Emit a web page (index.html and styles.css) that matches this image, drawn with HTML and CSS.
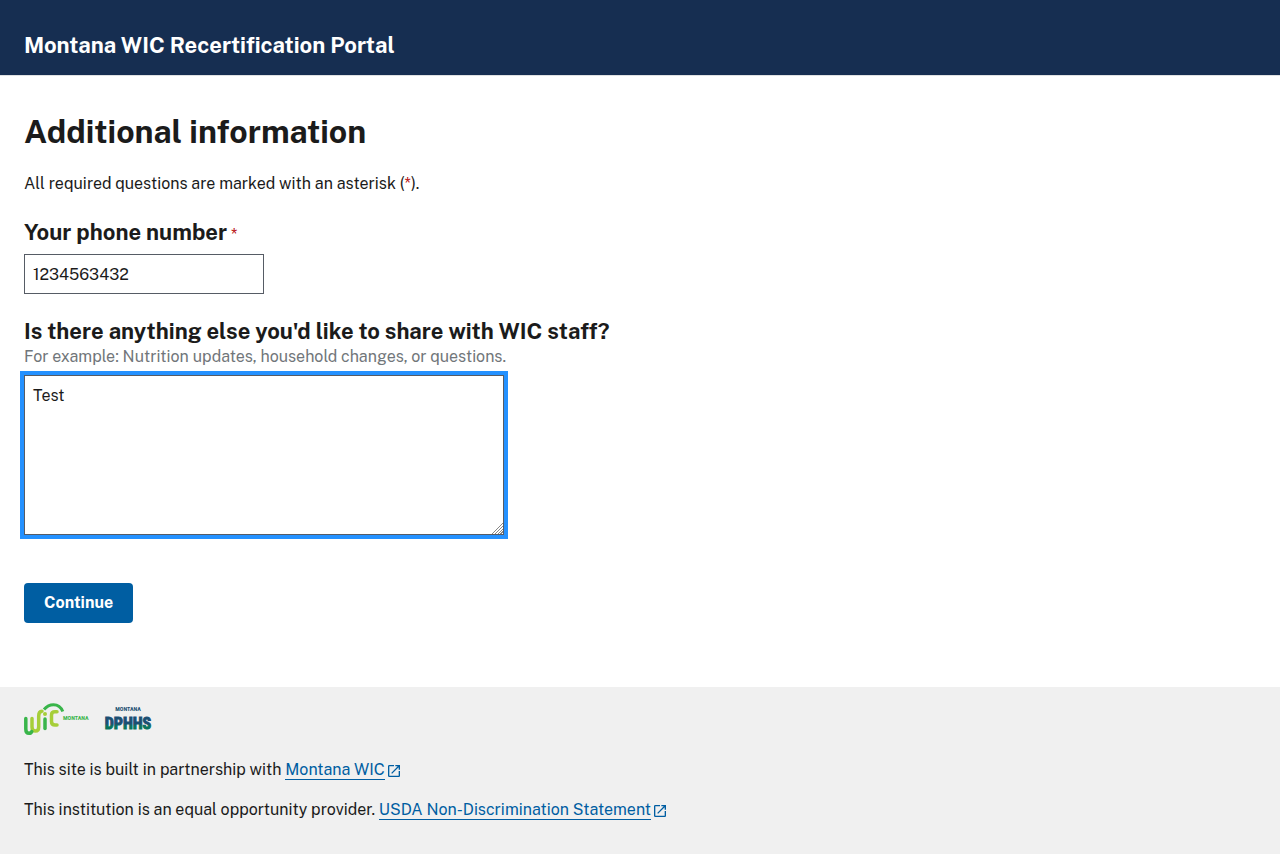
FILE: index.html
```html
<!DOCTYPE html>
<html lang="en">
<head>
<meta charset="utf-8">
<meta name="viewport" content="width=device-width, initial-scale=1">
<title>Additional information | Montana WIC Recertification Portal</title>
<link rel="stylesheet" href="styles.css">
</head>
<body>
<header class="header">
  <div class="header-title">Montana WIC Recertification Portal</div>
</header>
<main class="main">
  <h1 class="title">Additional information</h1>
  <p class="intro">All required questions are marked with an asterisk (<abbr class="required">*</abbr>).</p>
  <form class="form">
    <div class="field">
      <label class="label" for="phone">Your phone number<abbr class="required label-mark">*</abbr></label>
      <input class="input" id="phone" type="tel" value="1234563432">
    </div>
    <div class="field">
      <label class="label" for="comments">Is there anything else you'd like to share with WIC staff?</label>
      <span class="hint" id="comments-hint">For example: Nutrition updates, household changes, or questions.</span>
      <textarea class="input textarea focused" id="comments" aria-describedby="comments-hint">Test</textarea>
    </div>
    <button class="button" type="button">Continue</button>
  </form>
</main>
<footer class="footer">
  <div class="logos">
    <svg class="logo-wic" viewBox="0 0 66 32" role="img" aria-label="Montana WIC">
      <g fill="none" stroke-width="3.500" stroke-linecap="round">
        <path stroke="#a6ce39" d="M8 15.500V24Q8 28 11.500 28Q14.700 28 14.700 24V13Q14.700 8.500 18 8.200"/>
        <path stroke="#39b54a" d="M1.800 15.500V26Q1.800 30.300 5 30.300Q7 30.300 7.800 28.500"/>
        <path stroke="#39b54a" d="M21 16V25.500"/>
        <path stroke="#a6ce39" d="M33 8.800H31Q27.500 8.800 27.500 12V18.500Q27.500 22 31 22H33"/>
        <path stroke="#39b54a" stroke-width="3" stroke-linecap="butt" d="M20 6.500Q24 1.700 29.500 1.700Q36 1.700 38.800 8.500"/>
      </g>
      <circle cx="21" cy="11" r="2" fill="#a6ce39"/>
      <text class="wic-text" x="39" y="17">MONTANA</text>
    </svg>
    <svg class="logo-dphhs" viewBox="0 0 46 28" role="img" aria-label="Montana DPHHS">
      <defs>
        <linearGradient id="dphhs-fill" x1="0" y1="0" x2="0" y2="1">
          <stop offset="0.500" stop-color="#1b4f72"/>
          <stop offset="0.650" stop-color="#08735c"/>
        </linearGradient>
      </defs>
      <text class="dphhs-small" x="23" y="6">MONTANA</text>
      <text class="dphhs-large" x="23" y="24" fill="url(#dphhs-fill)" stroke="url(#dphhs-fill)">DPHHS</text>
    </svg>
  </div>
  <p class="footer-text">This site is built in partnership with <a class="link" href="#wic">Montana WIC</a><svg class="external" viewBox="0 0 24 24" aria-hidden="true"><path d="M19 19H5V5h7V3H5a2 2 0 0 0-2 2v14a2 2 0 0 0 2 2h14c1.100 0 2-.9 2-2v-7h-2v7zM14 3v2h3.590l-9.830 9.830 1.410 1.410L19 6.410V10h2V3h-7z"/></svg></p>
  <p class="footer-text">This institution is an equal opportunity provider. <a class="link" href="#usda">USDA Non-Discrimination Statement</a><svg class="external" viewBox="0 0 24 24" aria-hidden="true"><path d="M19 19H5V5h7V3H5a2 2 0 0 0-2 2v14a2 2 0 0 0 2 2h14c1.100 0 2-.9 2-2v-7h-2v7zM14 3v2h3.590l-9.830 9.830 1.410 1.410L19 6.410V10h2V3h-7z"/></svg></p>
</footer>
</body>
</html>
```
FILE: styles.css
```css
*, *::before, *::after { box-sizing: border-box; }

body {
  margin: 0;
  min-height: 100vh;
  display: flex;
  flex-direction: column;
  background: #fff;
  color: #1b1b1b;
  font-family: "Public Sans", Roboto, "Liberation Sans", sans-serif;
  font-size: 16px;
  line-height: 24px;
}

.header {
  padding: 31px 24px 16px;
  background: #162e51;
  border-bottom: 1px solid #dfe1e2;
  color: #fff;
}

.header-title { font-size: 22px; font-weight: 700; line-height: 28px; }

.main { flex: 1; padding: 36px 24px 64px; }

.title { margin: 0 0 20px; font-size: 32px; font-weight: 700; line-height: 40px; }

.intro { margin: 0 0 23px; }

.required { color: #b50909; text-decoration: none; }

.label-mark { margin-left: 4px; font-size: 16px; font-weight: 400; line-height: 16px; }

.field { display: flex; flex-direction: column; align-items: flex-start; margin-bottom: 24px; }

.label { font-size: 22px; font-weight: 700; line-height: 27px; }

.hint { line-height: 24px; color: #71767a; }

.input {
  width: 100%;
  max-width: 240px;
  height: 40px;
  margin: 8px 0 0;
  padding: 8px;
  border: 1px solid #565c65;
  border-radius: 0;
  background: #fff;
  color: #1b1b1b;
  font: inherit;
}

.textarea { max-width: 480px; height: 160px; margin-top: 6px; }

.textarea::-webkit-resizer {
  background:
    linear-gradient(135deg, #fff 0 60%, transparent 60%),
    repeating-linear-gradient(135deg, #fff 0 1px, #888 1px 2px);
}

.focused { outline: 4px solid #2491ff; }

.button {
  margin-top: 24px;
  padding: 8px 20px;
  border: 0;
  border-radius: 4px;
  background: #005ea2;
  color: #fff;
  font: inherit;
  font-weight: 700;
}

.footer { display: grid; gap: 16px; padding: 16px 24px 32px; background: #f0f0f0; }

.logos { display: flex; align-items: center; gap: 15px; margin-bottom: 7px; }

.logo-wic { width: 66px; height: 32px; overflow: visible; }

.logo-dphhs { width: 46px; height: 28px; overflow: visible; }

.wic-text { font: 700 6px "Liberation Sans Narrow", "Roboto Condensed", Roboto, sans-serif; fill: #39b54a; }

.dphhs-small { font: 700 6px "Liberation Sans Narrow", "Roboto Condensed", Roboto, sans-serif; fill: #1b4f72; text-anchor: middle; }

.dphhs-large { font: 700 16px "Liberation Sans Narrow", "Roboto Condensed", Roboto, sans-serif; stroke-width: 1px; text-anchor: middle; }

.footer-text { margin: 0; }

.link { border-bottom: 1px solid #005ea2; color: #005ea2; text-decoration: none; }

.external { width: 16px; height: 16px; margin-left: 1px; fill: #005ea2; vertical-align: -4px; }
```
